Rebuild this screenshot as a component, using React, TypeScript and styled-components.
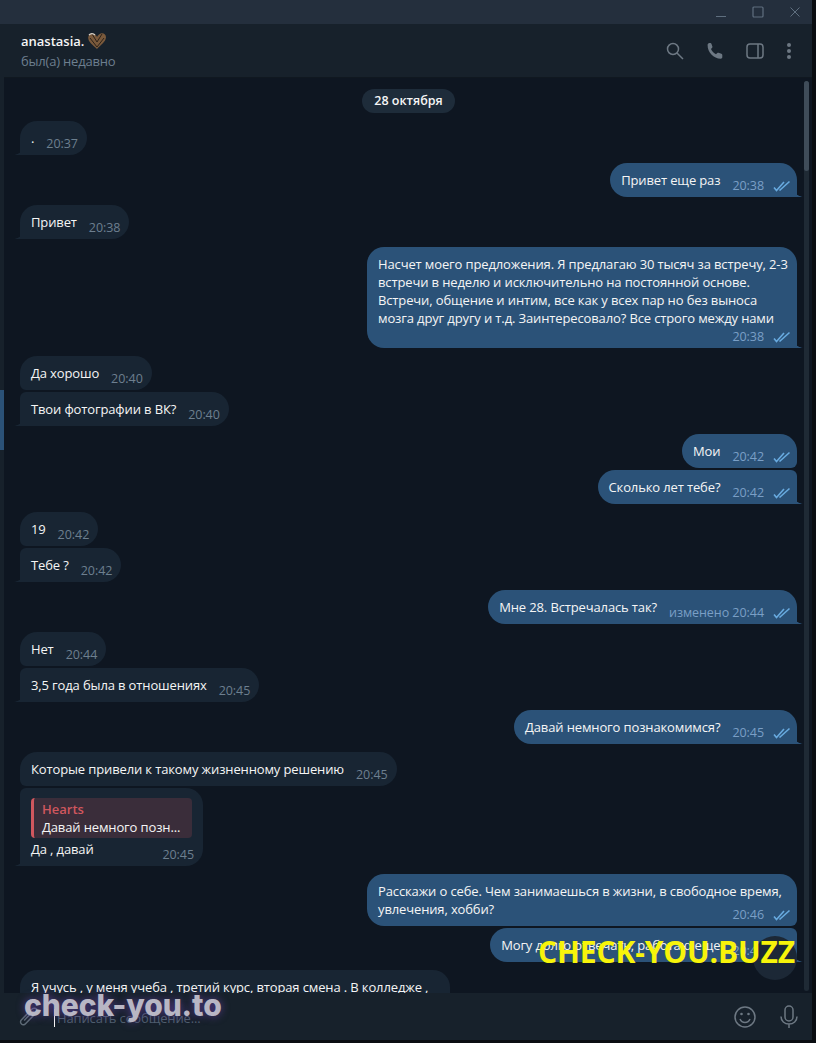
import React from 'react';
import styled, { createGlobalStyle } from 'styled-components';

const Global = createGlobalStyle`
  html, body {
    margin: 0;
    padding: 0;
    background: #0a0d11;
  }
  * {
    box-sizing: border-box;
  }
`;

const Screen = styled.div`
  position: relative;
  width: 816px;
  height: 1043px;
  overflow: hidden;
  background: #0a0d11;
  font-family: 'Open Sans', 'Noto Sans', sans-serif;
  font-size: 13px;
  color: #f5f5f5;
`;

const Window = styled.div`
  width: 812px;
  height: 1040px;
  display: flex;
  flex-direction: column;
  background: #0e1621;
`;

const TitleBar = styled.div`
  height: 24px;
  flex: none;
  display: flex;
  justify-content: flex-end;
  align-items: center;
  gap: 25px;
  padding-right: 11px;
  background: #242f3d;
  color: #5f6f7f;
`;

const Body = styled.div`
  flex: 1;
  display: flex;
  min-height: 0;
`;

const SideStrip = styled.div`
  width: 4px;
  flex: none;
  padding-top: 366px;
  background: #17212b;
`;

const ActiveMark = styled.div`
  height: 60px;
  background: #2b5278;
`;

const Main = styled.div`
  flex: 1;
  min-width: 0;
  display: flex;
  flex-direction: column;
`;

const Header = styled.header`
  height: 54px;
  flex: none;
  display: flex;
  align-items: center;
  justify-content: space-between;
  padding: 0 20px 0 17px;
  background: #17212b;
  border-bottom: 1px solid #101820;
`;

const PeerName = styled.div`
  display: flex;
  align-items: center;
  gap: 3px;
  font-size: 13px;
  line-height: 18px;
  font-weight: 600;
  color: #f5f5f5;
`;

const PeerStatus = styled.div`
  margin-top: 2px;
  font-size: 13px;
  line-height: 18px;
  letter-spacing: -0.2px;
  color: #6d7f8f;
`;

const HeaderIcons = styled.div`
  display: flex;
  align-items: center;
  gap: 22px;
  color: #6d7883;
`;

const ChatRow = styled.div`
  flex: 1;
  min-height: 0;
  display: flex;
`;

const Feed = styled.div`
  flex: 1;
  min-width: 0;
  display: flex;
  flex-direction: column;
  padding: 11px 7px 0 16px;
  overflow: hidden;
`;

const ScrollTrack = styled.div`
  width: 5px;
  flex: none;
  margin: 3px 3px 2px 0;
  border-radius: 3px;
  background: #1f2a35;
`;

const ScrollThumb = styled.div`
  height: 90px;
  border-radius: 3px;
  background: #3f4c59;
`;

const DatePill = styled.div`
  align-self: center;
  flex: none;
  height: 24px;
  padding: 0 12px;
  border-radius: 12px;
  background: #1e2c3a;
  font-size: 12.5px;
  line-height: 24px;
  font-weight: 600;
  color: #f5f5f5;
`;

const Bubble = styled.div<{
  $out?: boolean;
  $tail?: boolean;
  $joined?: boolean;
  $wide?: boolean;
  $full?: boolean;
}>`
  position: relative;
  flex: none;
  align-self: ${(p) => (p.$out ? 'flex-end' : 'flex-start')};
  display: flex;
  flex-direction: ${(p) => (p.$wide ? 'column' : 'row')};
  width: ${(p) => (p.$full ? '430px' : 'auto')};
  padding: 8px 11px 3px;
  margin-top: ${(p) => (p.$joined ? '2px' : '8px')};
  background: ${(p) => (p.$out ? '#2b5278' : '#182533')};
  border-radius: ${(p) =>
    p.$out
      ? `17px ${p.$joined ? '6px' : '17px'} ${p.$tail ? '0' : '6px'} 17px`
      : `${p.$joined ? '6px' : '17px'} 17px 17px ${p.$tail ? '0' : '6px'}`};

  ${(p) =>
    p.$tail
      ? `&::after {
    content: '';
    position: absolute;
    bottom: 0;
    width: 6px;
    height: 9px;
    ${p.$out ? 'right: -6px;' : 'left: -6px;'}
    background: radial-gradient(circle at ${p.$out ? '100% 0' : '0 0'}, transparent 8.5px, ${
      p.$out ? '#2b5278' : '#182533'
    } 9px);
  }`
      : ''}
`;

const CutBubble = styled(Bubble)`
  height: 60px;
`;

const Text = styled.div`
  font-size: 13px;
  line-height: 18px;
  letter-spacing: -0.13px;
  color: #f5f5f5;
  white-space: pre;
`;

const Meta = styled.div<{ $out?: boolean; $wide?: boolean; $overlap?: boolean }>`
  flex: none;
  display: flex;
  align-items: center;
  gap: 9px;
  align-self: flex-end;
  height: 18px;
  margin-top: ${(p) => (p.$overlap ? '-12px' : p.$wide ? '1px' : '6px')};
  margin-bottom: -1px;
  margin-left: ${(p) => (p.$wide ? '0' : '12px')};
  margin-right: ${(p) => (p.$out ? '-5px' : '-2px')};
  font-size: 12.5px;
  line-height: 18px;
  letter-spacing: -0.05px;
  color: ${(p) => (p.$out ? '#7a9fc6' : '#6d7f8f')};
`;

const Quote = styled.div`
  width: 161px;
  height: 40px;
  margin: 2px 0;
  padding: 2px 8px 0;
  border-left: 3px solid #d0575e;
  border-radius: 4px;
  background: #3a2d3a;
  font-size: 13px;
  line-height: 18px;
  white-space: nowrap;
`;

const QuoteAuthor = styled.div`
  font-weight: 600;
  color: #d0575e;
`;

const QuoteBody = styled.div`
  letter-spacing: -0.13px;
  color: #f5f5f5;
`;

const ReplyFoot = styled.div`
  display: flex;
  justify-content: space-between;
`;

const JumpButton = styled.div`
  position: absolute;
  left: 753px;
  top: 936px;
  width: 44px;
  height: 44px;
  border-radius: 50%;
  background: #1c2836;
`;

const Composer = styled.footer`
  position: relative;
  height: 47px;
  flex: none;
  display: flex;
  align-items: center;
  padding: 0 13px 0 13px;
  background: #17212b;
  color: #5d6a76;
`;

const Caret = styled.div`
  width: 1px;
  height: 18px;
  margin: 3px 2px 0 13px;
  background: #f5f5f5;
`;

const Placeholder = styled.div`
  flex: 1;
  margin-top: 2px;
  font-size: 13px;
  letter-spacing: -0.13px;
  color: #4f5f6e;
`;

const ComposerIcons = styled.div`
  display: flex;
  align-items: center;
  gap: 22px;
  color: #6d7883;
`;

const YellowMark = styled.div`
  position: absolute;
  left: 538px;
  top: 932px;
  font-size: 30px;
  line-height: 40px;
  font-weight: 700;
  letter-spacing: -0.15px;
  white-space: nowrap;
  color: #f7f40a;
`;

const GhostMark = styled.div`
  position: absolute;
  left: 24px;
  top: 986px;
  font-family: Inter, sans-serif;
  font-size: 30px;
  line-height: 38px;
  font-weight: 800;
  letter-spacing: -0.1px;
  white-space: nowrap;
  color: #b8b6c4;
  text-shadow: 0 0 8px rgba(110, 70, 180, 0.7);
`;

const Checks = () => (
  <svg width="18" height="12" viewBox="0 0 18 12" fill="none" stroke="#68aadf" strokeWidth="1.6">
    <path d="M1 7.5l2.5 3L11 2" />
    <path d="M6.5 10.5L16.5 1.5" />
  </svg>
);

const HeartIcon = () => (
  <svg width="20" height="18" viewBox="0 0 20 18">
    <path
      d="M10 17C6 13 1 10 1.2 5.5 1.4 2.5 4 1 6 1.6 8 2.2 9.4 3.6 10 5c.8-1.6 2.3-3.4 4.6-3.8C17 .9 19.2 2.8 19 5.5 18.6 10 13.5 13 10 17z"
      fill="#7a5a3c"
    />
    <path d="M5 2l5 8 5-8M3 6l7 9 7-9" fill="none" stroke="#2d2219" strokeWidth="1" />
    <path d="M2 3c1.5-1.5 4-2 6 0" fill="none" stroke="#d6d0c8" strokeWidth="1.3" />
  </svg>
);

const WindowIcons = () => (
  <>
    <svg width="12" height="12" viewBox="0 0 12 12" fill="none" stroke="currentColor" strokeWidth="1">
      <path d="M1 10.5h10" />
    </svg>
    <svg width="12" height="12" viewBox="0 0 12 12" fill="none" stroke="currentColor" strokeWidth="1.2">
      <rect x="1" y="1" width="10" height="10" rx="1" />
    </svg>
    <svg width="12" height="12" viewBox="0 0 12 12" fill="none" stroke="currentColor" strokeWidth="1">
      <path d="M1.5 1.5l9 9M10.500 1.500l-9 9" />
    </svg>
  </>
);

const SearchIcon = () => (
  <svg width="18" height="18" viewBox="0 0 18 18" fill="none" stroke="currentColor" strokeWidth="1.5">
    <circle cx="7" cy="7" r="5.5" />
    <path d="M11 11l6 6" />
  </svg>
);

const PhoneIcon = () => (
  <svg width="18" height="18" viewBox="0 0 18 18" fill="currentColor">
    <path d="M4.3 1c.6 0 1 .3 1.2.9l.9 2.6c.2.5 0 1-.3 1.3L5 7c.8 2.2 2.8 4.3 5 5.2l1.3-1.2c.4-.3.8-.4 1.3-.2l2.8 1c.6.2.9.6.9 1.2v2.3c0 .8-.7 1.4-1.5 1.400C7.500 16.700 1.500 10.200 1.600 3c0-1 .7-2 1.700-2h1z" />
  </svg>
);

const PanelIcon = () => (
  <svg width="18" height="16" viewBox="0 0 18 16" fill="none" stroke="currentColor" strokeWidth="1.5">
    <rect x="1" y="1" width="16" height="14" rx="3" />
    <path d="M12 1v14" />
  </svg>
);

const MoreIcon = () => (
  <svg width="6" height="18" viewBox="0 0 6 18" fill="currentColor">
    <circle cx="3" cy="3" r="2" />
    <circle cx="3" cy="9" r="2" />
    <circle cx="3" cy="15" r="2" />
  </svg>
);

const ClipIcon = () => (
  <svg width="24" height="24" viewBox="0 0 24 24" fill="none" stroke="currentColor" strokeWidth="1.5">
    <path d="M20 4.500c-1.800-1.800-4.200-1.500-5.800.2L4.500 14.800c-1.300 1.400-1.300 3 0 4.200 1.200 1.200 2.900 1 4-.2l9-9.300c.8-.8.8-1.800.1-2.500-.7-.7-1.700-.6-2.500.2l-8 8.300" />
  </svg>
);

const SmileIcon = () => (
  <svg width="24" height="24" viewBox="0 0 24 24" fill="none" stroke="currentColor" strokeWidth="1.5">
    <circle cx="12" cy="12" r="10" />
    <path d="M7 14c1 2.500 3 3.500 5 3.500s4-1 5-3.500" />
    <circle cx="8.500" cy="9" r="1.300" fill="currentColor" stroke="none" />
    <circle cx="15.500" cy="9" r="1.300" fill="currentColor" stroke="none" />
  </svg>
);

const MicIcon = () => (
  <svg width="20" height="24" viewBox="0 0 20 24" fill="none" stroke="currentColor" strokeWidth="1.5">
    <rect x="6" y="1" width="8" height="15" rx="4" />
    <path d="M2 11.500c0 4.500 3.500 7.500 8 7.500s8-3 8-7.500M10 19v4" />
  </svg>
);

type Msg = {
  text: string;
  time: string;
  out?: boolean;
  tail?: boolean;
  joined?: boolean;
  wide?: boolean;
  overlap?: boolean;
  edited?: boolean;
};

const messages: Msg[] = [
  { text: '.', time: '20:37', tail: true },
  { text: 'Привет еще раз', time: '20:38', out: true, tail: true },
  { text: 'Привет', time: '20:38', tail: true },
  {
    text: 'Насчет моего предложения. Я предлагаю 30 тысяч за встречу, 2-3\nвстречи в неделю и исключительно на постоянной основе.\nВстречи, общение и интим, все как у всех пар но без выноса\nмозга друг другу и т.д. Заинтересовало? Все строго между нами',
    time: '20:38',
    out: true,
    tail: true,
    wide: true,
  },
  { text: 'Да хорошо', time: '20:40' },
  { text: 'Твои фотографии в ВК?', time: '20:40', tail: true, joined: true },
  { text: 'Мои', time: '20:42', out: true },
  { text: 'Сколько лет тебе?', time: '20:42', out: true, tail: true, joined: true },
  { text: '19', time: '20:42' },
  { text: 'Тебе ?', time: '20:42', tail: true, joined: true },
  { text: 'Мне 28. Встречалась так?', time: '20:44', out: true, tail: true, edited: true },
  { text: 'Нет', time: '20:44' },
  { text: '3,5 года была в отношениях', time: '20:45', tail: true, joined: true },
  { text: 'Давай немного познакомимся?', time: '20:45', out: true, tail: true },
  { text: 'Которые привели к такому жизненному решению', time: '20:45' },
];

const later: Msg[] = [
  {
    text: 'Расскажи о себе. Чем занимаешься в жизни, в свободное время,\nувлечения, хобби?',
    time: '20:46',
    out: true,
    wide: true,
    overlap: true,
  },
  { text: 'Могу долго отвечать, работаю еще', time: '20:46', out: true, tail: true, joined: true },
];

const Message = ({ m }: { m: Msg }) => (
  <Bubble $out={m.out} $tail={m.tail} $joined={m.joined} $wide={m.wide} $full={m.wide}>
    <Text>{m.text}</Text>
    <Meta $out={m.out} $wide={m.wide} $overlap={m.overlap}>
      <span>{m.edited ? `изменено ${m.time}` : m.time}</span>
      {m.out && <Checks />}
    </Meta>
  </Bubble>
);

export default function App() {
  return (
    <Screen>
      <Global />
      <Window>
        <TitleBar>
          <WindowIcons />
        </TitleBar>
        <Body>
          <SideStrip>
            <ActiveMark />
          </SideStrip>
          <Main>
            <Header>
              <div>
                <PeerName>
                  anastasia. <HeartIcon />
                </PeerName>
                <PeerStatus>был(а) недавно</PeerStatus>
              </div>
              <HeaderIcons>
                <SearchIcon />
                <PhoneIcon />
                <PanelIcon />
                <MoreIcon />
              </HeaderIcons>
            </Header>
            <ChatRow>
              <Feed>
                <DatePill>28 октября</DatePill>
                {messages.map((m, i) => (
                  <Message key={i} m={m} />
                ))}
                <Bubble $tail $joined $wide>
                  <Quote>
                    <QuoteAuthor>Hearts</QuoteAuthor>
                    <QuoteBody>Давай немного позн...</QuoteBody>
                  </Quote>
                  <ReplyFoot>
                    <Text>Да , давай</Text>
                    <Meta>20:45</Meta>
                  </ReplyFoot>
                </Bubble>
                {later.map((m, i) => (
                  <Message key={i} m={m} />
                ))}
                <CutBubble $full>
                  <Text>Я учусь , у меня учеба , третий курс, вторая смена . В колледже ,</Text>
                </CutBubble>
              </Feed>
              <ScrollTrack>
                <ScrollThumb />
              </ScrollTrack>
            </ChatRow>
            <Composer>
              <ClipIcon />
              <Caret />
              <Placeholder>Написать сообщение...</Placeholder>
              <ComposerIcons>
                <SmileIcon />
                <MicIcon />
              </ComposerIcons>
            </Composer>
          </Main>
        </Body>
      </Window>
      <JumpButton />
      <YellowMark>CHECK-YOU.BUZZ</YellowMark>
      <GhostMark>check-you.to</GhostMark>
    </Screen>
  );
}
